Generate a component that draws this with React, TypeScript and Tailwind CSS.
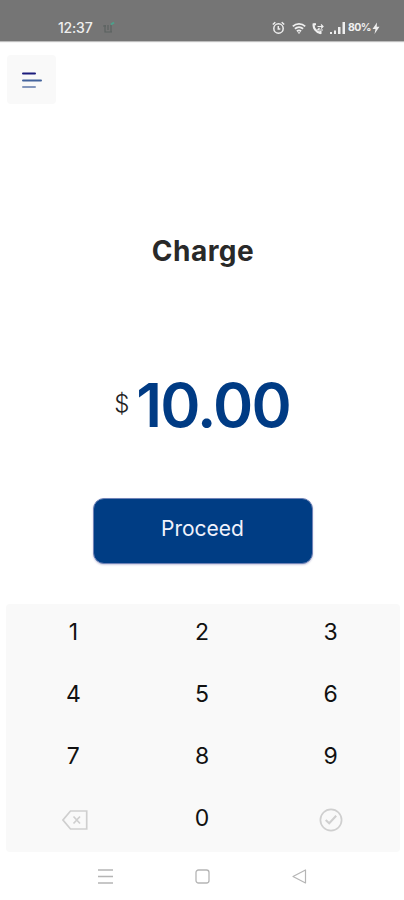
import type { ReactNode } from "react";

function StatusBar() {
  return (
    <header className="flex h-[41px] items-end justify-between bg-[#757575] pr-[24px] pb-[4px] pl-[58px] text-[#efefef] shadow-[0_1px_1px_#bdbdbd]">
      <div className="flex h-[18px] items-center gap-[9px]">
        <span className="w-[35px] text-[14px] leading-none font-medium tracking-[-0.2px] whitespace-nowrap">12:37</span>
        <svg width="14" height="14" viewBox="0 0 14 14" fill="none">
          <path d="M1 5h3M3 4v7h2M5 11h5M6 4v5M9 4v7" stroke="#5b6260" strokeWidth="1.2" />
          <path d="M9 3.5l3-2" stroke="#4aa38c" strokeWidth="2" />
        </svg>
      </div>
      <div className="flex h-[18px] items-center">
        {/* alarm */}
        <svg width="13" height="14" viewBox="0 0 13 14" fill="none" stroke="currentColor" strokeWidth="1.5">
          <circle cx="6.5" cy="7.5" r="4.7" />
          <path d="M6.3 5v3h2M.8 3.5L3.3 1.2M12.2 3.5L9.7 1.2" />
        </svg>
        {/* wifi */}
        <svg className="ml-[7px]" width="14" height="13" viewBox="0 0 14 13" fill="none" stroke="currentColor" strokeWidth="1.8">
          <path d="M.8 4.3c3.5-3.2 8.9-3.2 12.4 0M2.9 6.8c2.4-2.1 5.8-2.1 8.2 0M4.9 9.2c1.3-1 2.9-1 4.2 0" />
          <path d="M5.5 10.3h3L7 12z" fill="currentColor" stroke="none" />
        </svg>
        {/* call */}
        <svg className="ml-[6px]" width="12" height="13" viewBox="0 0 12 13" fill="none" stroke="currentColor">
          <path d="M1.8 1.5C.8 5.5 4 10.500 9 11.2" strokeWidth="2.2" />
          <path d="M1.5 2.2H4M8.5 9v3" strokeWidth="2" />
          <path d="M5.5 4.5H11M9 2.5l2 2-2 2M11 8H6M7.5 6l-2 2" strokeWidth="1.2" />
        </svg>
        <svg className="ml-[6px]" width="16" height="12" viewBox="0 0 16 12" fill="currentColor">
          <path d="M0 10h2v2H0zM4 8.5h2V12H4zM8 5h2.5v7H8zM12.5 0H15v12h-2.500z" />
        </svg>
        <span className="ml-[2px] w-[22px] text-[10.5px] leading-none font-bold tracking-[-0.6px] whitespace-nowrap">80%</span>
        <svg className="ml-[2px]" width="8" height="12" viewBox="0 0 7 12" fill="currentColor">
          <path d="M4.5.5L0 7h3l-1 5 5-7.300H4.200z" />
        </svg>
      </div>
    </header>
  );
}

function Key({ children }: { children: ReactNode }) {
  return (
    <button className="flex h-[62px] items-center justify-center pb-[6px] text-[23px] leading-none text-[#111111]">
      {children}
    </button>
  );
}

function Keypad() {
  return (
    <section className="mr-[4px] ml-[6px] grid h-[248px] grid-cols-3 rounded-[4px] bg-[#f9f9f9] pr-[5px] pl-[3px]">
      {["1", "2", "3", "4", "5", "6", "7", "8", "9"].map((digit) => (
        <Key key={digit}>{digit}</Key>
      ))}
      <button aria-label="Backspace" className="flex items-center justify-center pb-[2px]">
        <svg className="ml-[3px]" width="26" height="20" viewBox="0 0 26 20" fill="none" stroke="#cfcfcf" strokeWidth="1.7">
          <path d="M8.5 1h16.200v18H8.500L1 10z" />
          <path d="M11.5 6.500l6.500 7M18 6.500l-6.500 7" />
        </svg>
      </button>
      <Key>0</Key>
      <button aria-label="Confirm" className="flex items-center justify-center pb-[2px]">
        <svg width="24" height="24" viewBox="0 0 24 24" fill="none" stroke="#cfcfcf" strokeWidth="1.7">
          <circle cx="12" cy="12" r="10.6" />
          <path d="M6.7 12l3.500 3.300 7-7.600" strokeWidth="2" />
        </svg>
      </button>
    </section>
  );
}

function NavBar() {
  return (
    <nav className="flex h-12 items-center justify-center gap-[82px] text-[#b5b5b5]">
      <svg width="15" height="15" viewBox="0 0 15 15" stroke="currentColor" strokeWidth="1.3">
        <path d="M0 1h15M0 7.5h15M0 14h15" />
      </svg>
      <svg width="15" height="15" viewBox="0 0 15 15" fill="none" stroke="currentColor" strokeWidth="1.3">
        <rect x="1" y="1" width="13" height="13" rx="2.5" />
      </svg>
      <svg width="15" height="15" viewBox="0 0 15 15" fill="none" stroke="currentColor" strokeWidth="1.2" strokeLinejoin="round">
        <path d="M1 7.5L13.5 1v13z" />
      </svg>
    </nav>
  );
}

export default function App() {
  return (
    <div className="flex h-[900px] w-[404px] flex-col overflow-hidden bg-white font-['Inter',sans-serif]">
      <StatusBar />

      <main className="flex h-[563px] flex-col items-center">
        <button
          aria-label="Menu"
          className="mt-[14px] ml-[7px] flex h-[49px] w-[49px] items-center justify-center self-start rounded-[4px] bg-[#f9f9f9] pt-px"
        >
          <svg width="20" height="17" viewBox="0 0 20 17" strokeWidth="2" strokeLinecap="round">
            <path d="M1 1.5h12" stroke="#1b1b7c" />
            <path d="M1 8.5h18" stroke="#43639c" />
            <path d="M1 15h12" stroke="#8497bd" />
          </svg>
        </button>

        <h1 className="mt-[130px] ml-[2px] text-[28px] leading-[34px] font-bold tracking-[0.5px] text-[#292929]">Charge</h1>

        <div className="mt-[107px] flex h-[60px] items-center gap-[7px]">
          <span className="pb-[2px] text-[24px] leading-none font-light text-[#222222]">$</span>
          <span className="text-[61px] leading-[60px] font-semibold tracking-[-1.8px] text-[#003b84]">10.00</span>
        </div>

        <button className="mt-[63px] ml-px flex h-[66px] w-[220px] items-center justify-center rounded-[11px] border border-[#6f83b7] bg-[#003d84] pb-[4px] text-[21px] text-[#f0f2fc] shadow-[0_1px_2px_#c9c9df]">
          Proceed
        </button>
      </main>

      <Keypad />
      <NavBar />
    </div>
  );
}
